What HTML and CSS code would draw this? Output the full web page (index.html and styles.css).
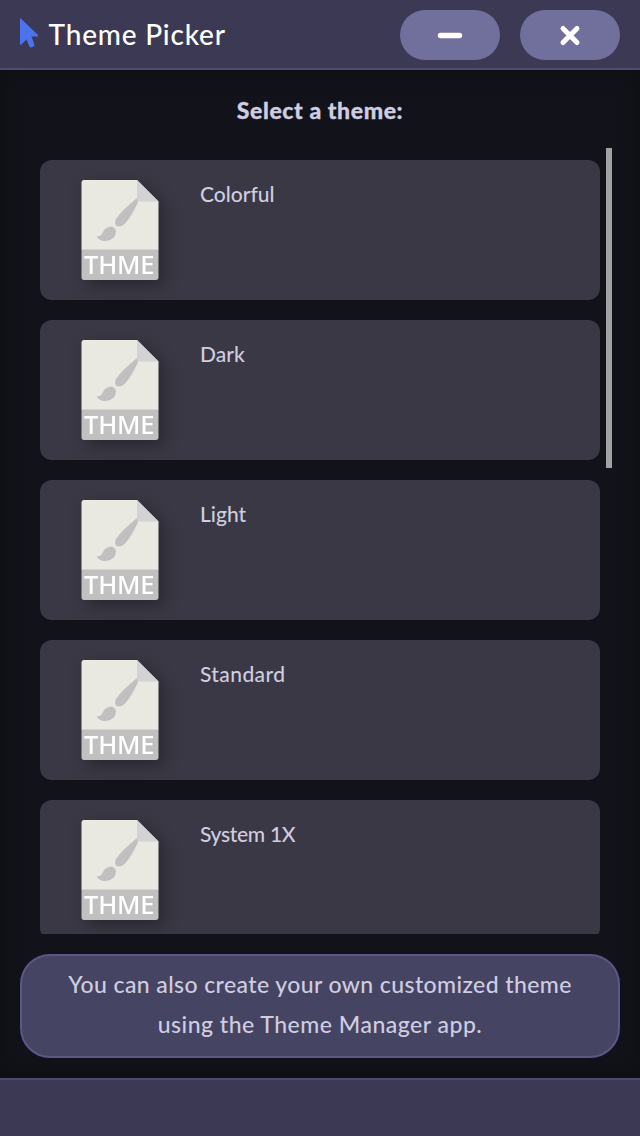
FILE: index.html
```
<!DOCTYPE html>
<html lang="en">
<head>
<meta charset="utf-8">
<title>Theme Picker</title>
<link rel="stylesheet" href="styles.css">
</head>
<body>
<svg class="defs" width="0" height="0">
  <symbol id="theme-file" viewBox="0 0 78 100">
    <path fill="#e9e9e1" d="M3 0H56L77.500 21.500V70H0.500V3Q0.500 0 3 0Z"/>
    <path fill="#d2d2d4" d="M56 0L77.500 21.500H56Z"/>
    <path fill="#c0c0c0" d="M0.500 69.500H77.500V97Q77.500 100 75 100H3Q0.500 100 0.500 97Z"/>
    <path fill="#c0c0c0" d="M56 18L57 22Q51 36 44.500 43Q41 47 36 46.500Q33 44 34.500 40Q37 34 56 18ZM31 46.500Q35 48 35 52Q34 60 25 61Q19 61.500 15.500 56.500Q20 56.500 21.500 53Q24 46.500 31 46.500Z"/>
  </symbol>
</svg>
<div class="app">
  <header class="titlebar">
    <svg class="cursor" width="20" height="32" viewBox="0 0 20 32"><path fill="#4d73ec" d="M0 0.800Q0 0 1 0.700L18 17Q19 18.500 17.500 18.500H11.500L14.500 27Q14.500 28 13.500 28.500L11 29.500Q10 29.500 9.500 28.500L6.500 21.500L1.300 26.500Q0 27.500 0 26Z"/></svg>
    <h1 class="title">Theme Picker</h1>
    <button class="control" aria-label="Minimize"><svg width="28" height="28" viewBox="0 0 28 28"><path d="M4.500 14.500H23.500" stroke="#fff" stroke-width="5.400" stroke-linecap="round"/></svg></button>
    <button class="control" aria-label="Close"><svg width="28" height="28" viewBox="0 0 28 28"><path d="M7 7.500L21 21.500M21 7.500L7 21.500" stroke="#fff" stroke-width="5" stroke-linecap="round"/></svg></button>
  </header>
  <main class="content">
    <h2 class="heading">Select a theme:</h2>
    <div class="scroll">
      <div class="list">
        <div class="item"><div class="file"><svg class="page"><use href="#theme-file"/></svg><span class="file-label">THME</span></div><span class="name colorful">Colorful</span></div>
        <div class="item"><div class="file"><svg class="page"><use href="#theme-file"/></svg><span class="file-label">THME</span></div><span class="name dark">Dark</span></div>
        <div class="item"><div class="file"><svg class="page"><use href="#theme-file"/></svg><span class="file-label">THME</span></div><span class="name light">Light</span></div>
        <div class="item"><div class="file"><svg class="page"><use href="#theme-file"/></svg><span class="file-label">THME</span></div><span class="name standard">Standard</span></div>
        <div class="item"><div class="file"><svg class="page"><use href="#theme-file"/></svg><span class="file-label">THME</span></div><span class="name system">System 1X</span></div>
      </div>
      <div class="thumb"></div>
    </div>
    <p class="info"><span class="line-a">You can also create your own customized theme</span><br><span class="line-b">using the Theme Manager app.</span></p>
  </main>
  <footer class="footer"></footer>
</div>
</body>
</html>
```
FILE: styles.css
```
* { box-sizing: border-box; }
body { margin: 0; font-family: Lato, "Open Sans", sans-serif; color: #cfcde0; background: #12121a; }
.defs { position: absolute; }
.app { display: flex; flex-direction: column; width: 640px; height: 1136px; overflow: hidden; }
.titlebar { display: flex; align-items: center; gap: 20px; height: 70px; padding: 0 20px; background: #3b3954; border-bottom: 2px solid #4d4b70; }
.cursor { flex: none; margin-right: -11.5px; }
.title { flex: 1; margin: 0; color: #fff; font-size: 28px; font-weight: 500; line-height: 40px; letter-spacing: .8px; white-space: nowrap; }
.control { display: flex; align-items: center; justify-content: center; width: 100px; height: 50px; padding: 0; margin-top: 2px; border: 0; border-radius: 25px; background: #716f9c; }
.content { display: flex; flex-direction: column; height: 1008px; padding: 20px; background: #12121a; box-shadow: inset 0 0 20px #0e1010; }
.heading { margin: 0; height: 58px; text-align: center; font-size: 23px; font-weight: 900; line-height: 40px; letter-spacing: .6px; -webkit-text-stroke: .3px; }
.scroll { display: flex; justify-content: space-between; height: 786px; padding: 0 8px 0 20px; overflow: hidden; }
.list { display: flex; flex-direction: column; gap: 20px; width: 560px; padding-top: 12px; }
.item { display: flex; flex: none; height: 140px; padding: 20px 0 0 41px; gap: 41px; border-radius: 12px; background: #393844; }
.file { position: relative; width: 78px; height: 100px; filter: drop-shadow(5px 5px 8px rgba(0, 0, 0, .3)); }
.page { display: block; width: 78px; height: 100px; }
.file-label { position: absolute; left: 3px; bottom: 1px; font-family: "Noto Sans", sans-serif; font-size: 25.500px; font-weight: 500; line-height: 30px; letter-spacing: -.2px; color: #fff; white-space: nowrap; }
.name { font-size: 21px; font-weight: 500; line-height: 28px; letter-spacing: 0; }
.standard { letter-spacing: .4px; }
.system { letter-spacing: -.3px; }
.thumb { width: 6px; height: 320px; background: #a2a2a5; }
.info { margin: 20px 0 0; height: 104px; padding: 8px 0; border: 2px solid #5b5786; border-radius: 30px; background: #464463; text-align: center; font-size: 23px; font-weight: 500; line-height: 40px; letter-spacing: .5px; white-space: nowrap; }
.line-a { letter-spacing: .4px; }
.footer { flex: 1; background: #3b3954; border-top: 2px solid #4d4b70; }
```
